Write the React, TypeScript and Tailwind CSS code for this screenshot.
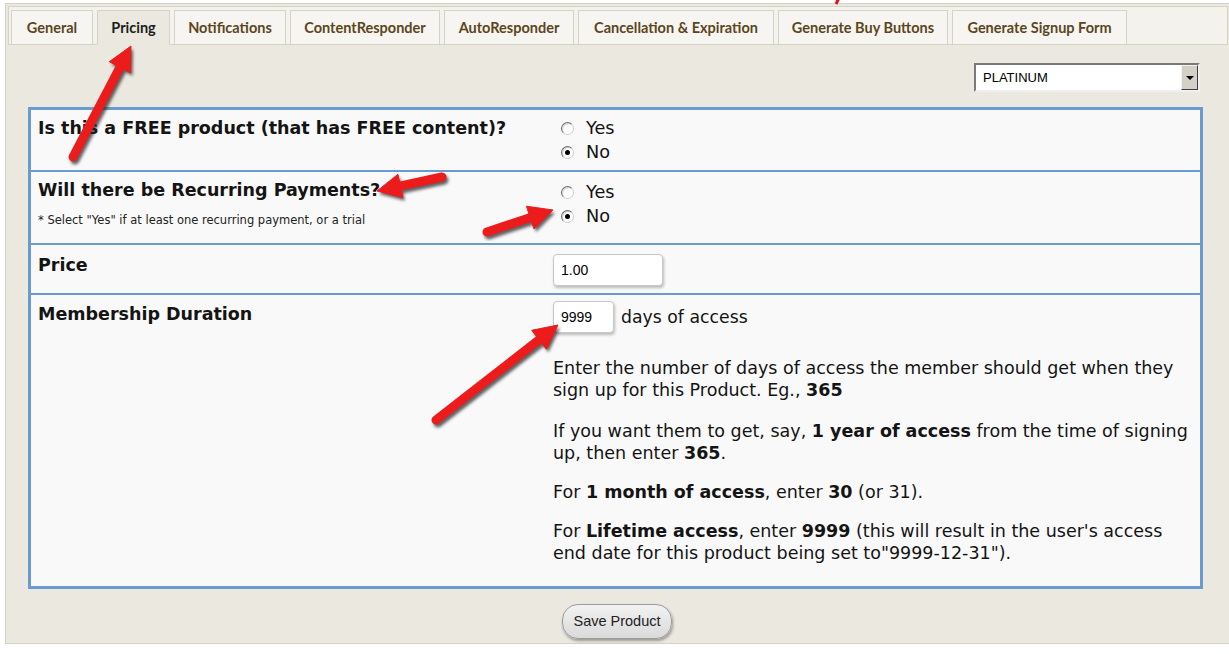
import React from "react";

const TABS = [
  { label: "General", w: "w-[82px]" },
  { label: "Pricing", w: "w-[73px]", active: true },
  { label: "Notifications", w: "w-[112px]" },
  { label: "ContentResponder", w: "w-[150px]" },
  { label: "AutoResponder", w: "w-[130px]" },
  { label: "Cancellation & Expiration", w: "w-[196px]" },
  { label: "Generate Buy Buttons", w: "w-[170px]" },
  { label: "Generate Signup Form", w: "w-[175px]" },
];

// tail -> tip, in page coordinates
const ARROWS: [number, number, number, number][] = [
  [73, 157, 131, 46],
  [442, 177, 377, 191],
  [487, 232, 553, 210],
  [436, 420, 558, 325],
];

function arrowShapes(x1: number, y1: number, x2: number, y2: number) {
  const dx = x2 - x1;
  const dy = y2 - y1;
  const len = Math.hypot(dx, dy);
  const ux = dx / len;
  const uy = dy / len;
  const nx = -uy;
  const ny = ux;
  const L = 24;
  const H = 12;
  const bx = x2 - ux * L;
  const by = y2 - uy * L;
  const head = `${bx + nx * H},${by + ny * H} ${x2},${y2} ${bx - nx * H},${by - ny * H}`;
  return { bx: bx + ux * 2, by: by + uy * 2, head };
}

function Arrows() {
  return (
    <svg className="absolute left-0 top-0 pointer-events-none" width="1229" height="654">
      <defs>
        <filter id="blur" x="-20%" y="-20%" width="140%" height="140%">
          <feGaussianBlur stdDeviation="1.6" />
        </filter>
      </defs>
      {ARROWS.map(([x1, y1, x2, y2], i) => {
        const a = arrowShapes(x1, y1, x2, y2);
        return (
          <g key={i}>
            <g transform="translate(2 3)" filter="url(#blur)" opacity="0.7">
              <line x1={x1} y1={y1} x2={a.bx} y2={a.by} stroke="#222" strokeWidth="9" strokeLinecap="round" />
              <polygon points={a.head} fill="#222" />
            </g>
            <line x1={x1} y1={y1} x2={a.bx} y2={a.by} stroke="#ec1c1c" strokeWidth="9" strokeLinecap="round" />
            <polygon points={a.head} fill="#ec1c1c" strokeLinejoin="round" stroke="#ec1c1c" strokeWidth="1" />
          </g>
        );
      })}
      <line x1="840" y1="-4" x2="836" y2="4" stroke="#d8141a" strokeWidth="3" />
    </svg>
  );
}

function Radio({ checked, label }: { checked?: boolean; label: string }) {
  return (
    <div className="flex items-center h-[24px] ml-[8px]">
      <span className="relative w-[13px] h-[13px] rounded-full border border-t-[#6f6f6f] border-l-[#6f6f6f] border-b-[#cfcfcf] border-r-[#cfcfcf] bg-white shadow-[inset_1px_1px_1px_rgba(0,0,0,0.2)]">
        {checked && <span className="absolute left-[3px] top-[3px] w-[5px] h-[5px] rounded-full bg-black" />}
      </span>
      <span className="ml-[12px] text-[17.7px] leading-[24px]">{label}</span>
    </div>
  );
}

function TextBox({ value, w }: { value: string; w: string }) {
  return (
    <div
      className={`${w} h-[32px] flex items-center pl-[7px] bg-white border border-[#c8c8c8] rounded-[4px] shadow-[1px_2px_3px_rgba(0,0,0,0.25)] font-['Liberation_Sans',Arial,sans-serif] text-[14px] text-black`}
    >
      {value}
    </div>
  );
}

export default function App() {
  return (
    <div className="relative w-[1229px] h-[654px] overflow-hidden bg-white font-['DejaVu_Sans',Verdana,sans-serif] text-[#141414]">
      <div className="ml-[5px] mt-[3px] w-[1226px] h-[641px] border border-[#d5d2c7] bg-[#ebe8df]">
        {/* Tabs */}
        <div className="mx-[2px] mt-[2px] h-[39px] border border-[#d5d2c7] bg-[#f4f2ed] flex items-end gap-[4px] pl-[2px]">
          {TABS.map((t) => (
            <div
              key={t.label}
              className={`${t.w} h-[35px] -mb-px flex items-center justify-center border border-[#d5d2c7] font-['Lato',sans-serif] font-bold text-[14.5px] ${
                t.active ? "bg-[#ebe8df] border-b-[#ebe8df] text-[#1c1c1c]" : "bg-[#f6f5f1] text-[#5c461c]"
              }`}
            >
              {t.label}
            </div>
          ))}
        </div>

        <div className="ml-[22px] w-[1175px]">
          {/* Product select */}
          <div className="mt-[18px] flex justify-end pr-[3px]">
            <div className="w-[226px] h-[29px] flex bg-white border-2 border-t-[#7a7a7a] border-l-[#7a7a7a] border-b-[#f0f0f0] border-r-[#f0f0f0]">
              <div className="flex-1 flex items-center pl-[7px] font-['Liberation_Sans',Arial,sans-serif] text-[13px] text-black">
                PLATINUM
              </div>
              <div className="w-[17px] h-full flex items-center justify-center bg-[#d4d0c8] border border-t-[#f4f4f4] border-l-[#f4f4f4] border-b-[#404040] border-r-[#404040]">
                <span className="w-0 h-0 border-l-[4px] border-r-[4px] border-t-[4px] border-l-transparent border-r-transparent border-t-black" />
              </div>
            </div>
          </div>

          {/* Pricing table */}
          <div className="mt-[15px] border-[3px] border-[#6a9bd0] bg-[#f9f9f9]">
            <div className="h-[60px] flex">
              <div className="w-[517px] pl-[7px] pt-[7px]">
                <div className="font-bold text-[17.5px] leading-[22px]">Is this a FREE product (that has FREE content)?</div>
              </div>
              <div className="flex-1 pl-[5px] pt-[6px]">
                <Radio label="Yes" />
                <Radio label="No" checked />
              </div>
            </div>

            <div className="h-[73px] flex border-t-2 border-[#6a9bd0]">
              <div className="w-[517px] pl-[7px] pt-[7px]">
                <div className="font-bold text-[17.5px] leading-[22px]">Will there be Recurring Payments?</div>
                <div className="mt-[12px] text-[11.5px] leading-[14px] text-[#222]">
                  * Select "Yes" if at least one recurring payment, or a trial
                </div>
              </div>
              <div className="flex-1 pl-[5px] pt-[8px]">
                <Radio label="Yes" />
                <Radio label="No" checked />
              </div>
            </div>

            <div className="h-[50px] flex border-t-2 border-[#6a9bd0]">
              <div className="w-[517px] pl-[7px] pt-[9px]">
                <div className="font-bold text-[17.5px] leading-[22px]">Price</div>
              </div>
              <div className="flex-1 pl-[5px] pt-[9px]">
                <TextBox value="1.00" w="w-[110px]" />
              </div>
            </div>

            <div className="flex border-t-2 border-[#6a9bd0] pb-[22px]">
              <div className="w-[517px] pl-[7px] pt-[8px]">
                <div className="font-bold text-[17.5px] leading-[22px]">Membership Duration</div>
              </div>
              <div className="flex-1 pl-[5px] pt-[6px] text-[17.5px] leading-[22px]">
                <div className="flex items-center">
                  <TextBox value="9999" w="w-[61px]" />
                  <span className="ml-[7px] text-[17.3px]">days of access</span>
                </div>
                <p className="mt-[24px] whitespace-nowrap">
                  Enter the number of days of access the member should get when they
                  <br />
                  sign up for this Product. Eg., <b>365</b>
                </p>
                <p className="mt-[19px] whitespace-nowrap">
                  If you want them to get, say, <b>1 year of access</b> from the time of signing
                  <br />
                  up, then enter <b>365</b>.
                </p>
                <p className="mt-[17px] whitespace-nowrap">
                  For <b>1 month of access</b>, enter <b>30</b> (or 31).
                </p>
                <p className="mt-[17px] whitespace-nowrap">
                  For <b>Lifetime access</b>, enter <b>9999</b> (this will result in the user's access
                  <br />
                  end date for this product being set to"9999-12-31").
                </p>
              </div>
            </div>
          </div>

          {/* Save */}
          <div className="mt-[15px] flex justify-center pl-[3px]">
            <button className="w-[110px] h-[35px] rounded-[16px] border border-[#9c9c9c] bg-gradient-to-b from-[#f2f2f2] to-[#dadada] shadow-[1px_2px_3px_rgba(0,0,0,0.35)] font-['Liberation_Sans',Arial,sans-serif] text-[14.5px] text-[#222]">
              Save Product
            </button>
          </div>
        </div>
      </div>
      <Arrows />
    </div>
  );
}
